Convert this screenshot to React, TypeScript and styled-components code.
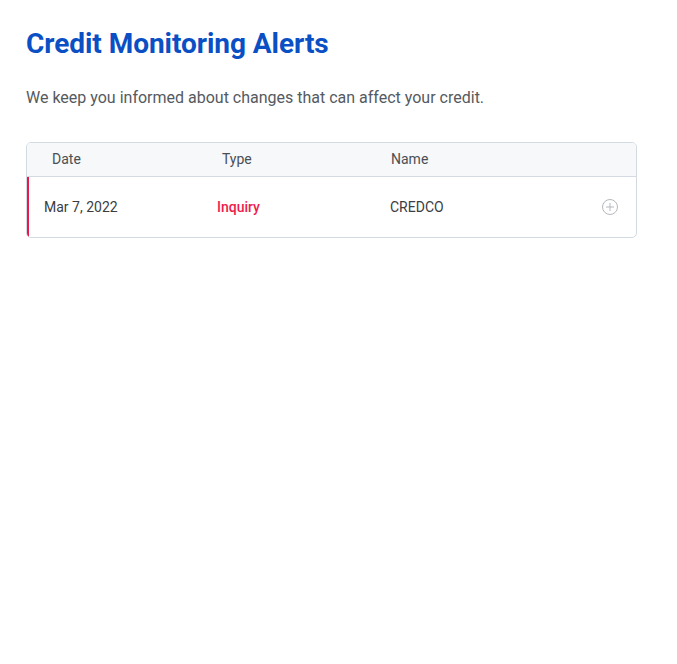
import React from "react";
import styled, { createGlobalStyle } from "styled-components";

const Global = createGlobalStyle`
  html, body { margin: 0; padding: 0; background: #fff; }
  body { font-family: Roboto, "Liberation Sans", Arial, sans-serif; }
`;

const Page = styled.main`
  padding: 27px 41px 0 26px;
`;

const Title = styled.h1`
  margin: 0;
  font-size: 28px;
  line-height: 34px;
  font-weight: 700;
  color: #0a4fc4;
  letter-spacing: -0.05px;
`;

const Subtitle = styled.p`
  margin: 26px 0 0;
  font-size: 16px;
  line-height: 22px;
  color: #555a60;
`;

const Table = styled.div`
  margin-top: 33px;
  width: 609px;
  border: 1px solid #d3dae2;
  border-radius: 5px;
  overflow: hidden;
`;

const HeaderRow = styled.div`
  display: grid;
  grid-template-columns: 170px 169px 1fr;
  height: 34px;
  box-sizing: border-box;
  padding-bottom: 1px;
  align-items: center;
  background: #f6f8fa;
  border-bottom: 1px solid #d3dae2;
  padding-left: 25px;
  font-size: 14px;
  color: #4b4f54;
`;

const Row = styled.div<{ $accent: string }>`
  display: grid;
  grid-template-columns: 173px 173px 1fr 35px;
  height: 60px;
  align-items: center;
  border-left: 2px solid ${(p) => p.$accent};
  padding-left: 15px;
  font-size: 14px;
  color: #3a3d41;
`;

const TypeCell = styled.span<{ $color: string }>`
  color: ${(p) => p.$color};
  font-weight: 500;
`;

const ExpandButton = styled.button`
  border: 0;
  background: none;
  padding: 0;
  width: 18px;
  height: 18px;
  display: flex;
  align-items: center;
  justify-content: center;
  cursor: pointer;
`;

export default function App() {
  return (
    <>
      <Global />
      <Page>
        <Title>Credit Monitoring Alerts</Title>
        <Subtitle>We keep you informed about changes that can affect your credit.</Subtitle>
        <Table>
          <HeaderRow>
            <span>Date</span>
            <span>Type</span>
            <span>Name</span>
          </HeaderRow>
          <Row $accent="#e8194a">
            <span>Mar 7, 2022</span>
            <TypeCell $color="#ef1c4a">Inquiry</TypeCell>
            <span>CREDCO</span>
            <ExpandButton aria-label="Expand">
              <svg width="18" height="18" viewBox="0 0 18 18" fill="none" stroke="#b4b8bd" strokeWidth="1">
                <circle cx="9" cy="9" r="7.5" />
                <path d="M9 5v8M5 9h8" />
              </svg>
            </ExpandButton>
          </Row>
        </Table>
      </Page>
    </>
  );
}
